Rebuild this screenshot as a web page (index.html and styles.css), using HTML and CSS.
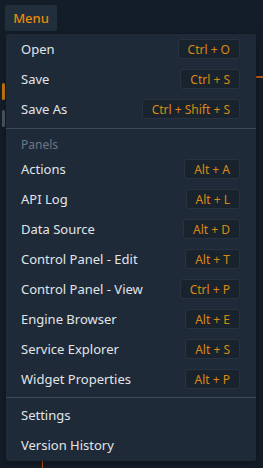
FILE: index.html
```html
<html>
<head>
<link rel="stylesheet" href="styles.css">
</head>
<body>
<div class="topbar">
  <button class="menubtn">Menu</button>
</div>

<div class="backdrop">
  <div class="bg-tab orange"></div>
  <div class="bg-tab gray"></div>
  <div class="bg-line"></div>
  <div class="bg-vline"></div>
</div>

<div class="dropdown">
  <div class="item"><span>Open</span><span class="key">Ctrl + O</span></div>
  <div class="item"><span>Save</span><span class="key">Ctrl + S</span></div>
  <div class="item"><span>Save As</span><span class="key">Ctrl + Shift + S</span></div>
  <div class="sep"></div>
  <div class="header">Panels</div>
  <div class="item"><span>Actions</span><span class="key">Alt + A</span></div>
  <div class="item"><span>API Log</span><span class="key">Alt + L</span></div>
  <div class="item"><span>Data Source</span><span class="key">Alt + D</span></div>
  <div class="item"><span>Control Panel - Edit</span><span class="key">Alt + T</span></div>
  <div class="item"><span>Control Panel - View</span><span class="key">Ctrl + P</span></div>
  <div class="item"><span>Engine Browser</span><span class="key">Alt + E</span></div>
  <div class="item"><span>Service Explorer</span><span class="key">Alt + S</span></div>
  <div class="item"><span>Widget Properties</span><span class="key">Alt + P</span></div>
  <div class="sep lower"></div>
  <div class="item"><span>Settings</span></div>
  <div class="item"><span>Version History</span></div>
</div>
</body>
</html>
```

FILE: styles.css
```css
body {
  margin: 0;
  background: #131d28;
  font-family: "Noto Sans", "Open Sans", sans-serif;
  font-size: 13px;
  color: #e1e5e9;
  position: relative;
  height: 468px;
  overflow: hidden;
}

.topbar {
  padding: 5px 5px 0;
  height: 29px;
}

.menubtn {
  width: 52px;
  height: 26px;
  border: none;
  border-radius: 2px;
  background: #212e3c;
  color: #e8890c;
  font: 500 13px "Noto Sans", sans-serif;
  padding: 0 0 1px;
  text-align: center;
}

/* faint page content behind the menu */
.bg-tab {
  position: absolute;
  left: 2px;
  width: 3px;
  height: 17px;
  border-radius: 2px;
}
.bg-tab.orange { top: 83px; background: #c8780f; }
.bg-tab.gray { top: 110px; background: #4b5663; }
.bg-line {
  position: absolute;
  left: 256px;
  top: 76px;
  width: 7px;
  height: 2px;
  background: #b4541e;
}
.bg-vline {
  position: absolute;
  left: 42px;
  top: 458px;
  width: 1px;
  height: 10px;
  background: #b4541e;
}

.dropdown {
  position: absolute;
  left: 6px;
  top: 34px;
  width: 250px;
  background: #1e2a38;
  border-radius: 2px;
  padding-bottom: 1px;
  box-shadow: 0 2px 6px rgba(0, 0, 0, 0.35);
}

.item {
  display: flex;
  align-items: center;
  justify-content: space-between;
  height: 30px;
  padding: 0 16px 0 15px;
  white-space: nowrap;
}

.key {
  display: flex;
  align-items: center;
  height: 18px;
  padding: 0 9px;
  border: 1px solid #28333f;
  border-radius: 3px;
  background: #19232e;
  color: #d98912;
  font-size: 12px;
}

.sep {
  height: 1px;
  background: #3e4a57;
  margin: 4px 0 0;
}
.sep.lower {
  margin: 3px 0 2px;
}

.header {
  padding: 8px 15px 0;
  height: 17px;
  line-height: 16px;
  color: #6c7784;
  font-size: 12px;
}
```
